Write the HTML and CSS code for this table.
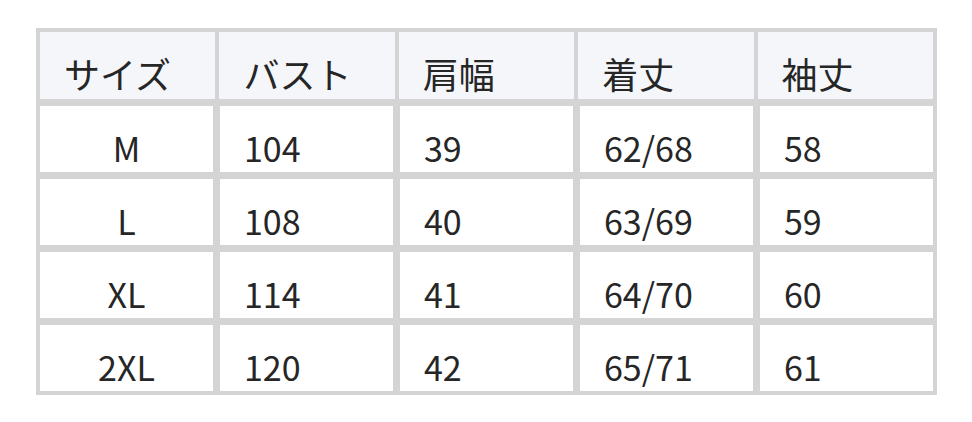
FILE: index.html
```html
<!DOCTYPE html>
<html lang="ja">
<head>
<meta charset="utf-8">
<link rel="stylesheet" href="styles.css">
</head>
<body>
<div class="size-table">
  <div class="row head">
    <div class="cell">サイズ</div>
    <div class="cell">バスト</div>
    <div class="cell">肩幅</div>
    <div class="cell">着丈</div>
    <div class="cell">袖丈</div>
  </div>
  <div class="row">
    <div class="cell size">M</div>
    <div class="cell">104</div>
    <div class="cell">39</div>
    <div class="cell">62/68</div>
    <div class="cell">58</div>
  </div>
  <div class="row">
    <div class="cell size">L</div>
    <div class="cell">108</div>
    <div class="cell">40</div>
    <div class="cell">63/69</div>
    <div class="cell">59</div>
  </div>
  <div class="row">
    <div class="cell size">XL</div>
    <div class="cell">114</div>
    <div class="cell">41</div>
    <div class="cell">64/70</div>
    <div class="cell">60</div>
  </div>
  <div class="row">
    <div class="cell size">2XL</div>
    <div class="cell">120</div>
    <div class="cell">42</div>
    <div class="cell">65/71</div>
    <div class="cell">61</div>
  </div>
</div>
</body>
</html>
```
FILE: styles.css
```css
html, body {
  margin: 0;
  padding: 0;
  background: #ffffff;
}
body {
  padding: 28px 0 0 36px;
  font-family: "Noto Sans CJK JP", "Noto Sans", sans-serif;
  font-weight: 400;
  color: #262626;
}
.size-table {
  width: 893px;
  background: #d4d4d4;
  padding: 4px;
  display: flex;
  flex-direction: column;
  gap: 7px;
}
.row {
  display: grid;
  grid-template-columns: repeat(5, 1fr);
  gap: 7px;
  height: 66px;
}
.row.head {
  gap: 4px;
  height: 67px;
}
.cell {
  background: #ffffff;
  font-size: 34px;
  line-height: normal;
  display: flex;
  align-items: flex-end;
  padding-left: 24px;
  white-space: nowrap;
}
.head .cell {
  background: #f5f6fa;
  font-size: 36px;
}
.cell.size {
  justify-content: center;
  padding-left: 0;
}
```
